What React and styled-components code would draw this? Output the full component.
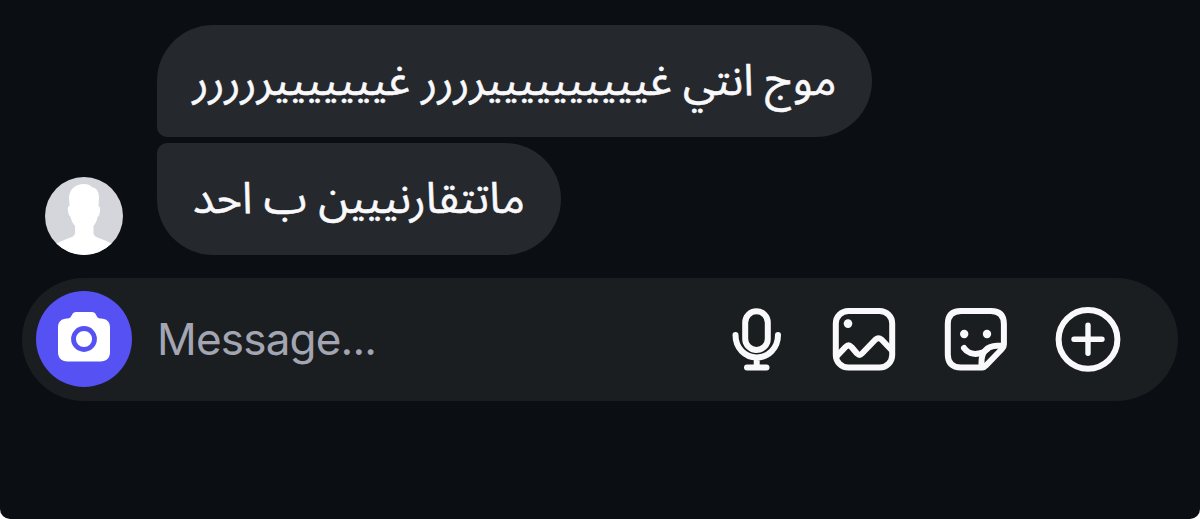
import React from "react";
import styled, { createGlobalStyle } from "styled-components";

const messages = [
  { id: 1, text: "موج انتي غييييييييييرررر غيييييييررررر", width: 715, radius: "56px 56px 56px 10px" },
  { id: 2, text: "ماتتقارنييين ب احد", width: 404, radius: "10px 56px 56px 56px" },
];

function Avatar() {
  return (
    <AvatarSvg viewBox="0 0 78 78">
      <clipPath id="avatar">
        <circle cx="39" cy="39" r="39" />
      </clipPath>
      <g clipPath="url(#avatar)">
        <rect width="78" height="78" fill="#d5d6db" />
        <path
          fill="#fff"
          d="M39 7C30 7 24 13 24 21L24.500 29C22 29.500 22.500 34 24 38C24.500 39.500 25.500 39 25.500 40C26.500 44 28 47 30 49V56C30 60 24 61 18 63.500C13 65.500 10 67 6 70V80H72V70C68 67 65 65.500 60 63.500C54 61 48.500 60 48.500 56V49C51 46 52 43 52.500 40C53.500 39 54 39 54.500 37C55.500 33 55.500 30 53.500 29L54 21C54 15 52 11 47.500 10.500C45.500 8 42.500 7 39 7Z"
        />
      </g>
    </AvatarSvg>
  );
}

function CameraIcon() {
  return (
    <svg width="52" height="50" viewBox="0 0 52 50">
      <path
        fill="#fff"
        d="M18 0H34C36 0 37 1 38 2.700C39.500 5.500 40 6.500 43 6.500C48.500 6.500 52 10 52 15V40C52 46 48.500 49.500 42.500 49.500H9.500C3.500 49.500 0 46 0 40V15C0 10 3.500 6.500 9 6.500C12 6.500 12.500 5.500 14 2.700C15 1 16 0 18 0Z"
      />
      <circle cx="26" cy="27" r="10.500" fill="none" stroke="#5551f3" strokeWidth="4.800" />
    </svg>
  );
}

function MicIcon() {
  return (
    <Icon viewBox="0 0 66 66">
      <rect x="26.200" y="5.200" width="22.600" height="38.800" rx="11.300" />
      <path d="M16.500 29C16.500 42 26 51.500 37.700 51.500S59 42 59 29M37.700 52V61M28 61.500H47.500" />
    </Icon>
  );
}

function ImageIcon() {
  return (
    <Icon viewBox="0 0 66 66">
      <rect x="4.800" y="5" width="56.400" height="56.600" rx="12.500" />
      <circle cx="17" cy="17.600" r="4.300" fill="#f9f9fb" stroke="none" />
      <path d="M5.500 50.500L14.500 41Q17.500 38 20.500 41L26 47.500Q28.500 50 31 47.500L44.500 33.500Q47.500 31 50.500 33.500L60.500 44" />
    </Icon>
  );
}

function StickerIcon() {
  return (
    <Icon viewBox="0 0 66 66">
      <path d="M39.500 61.500H18C9 61.500 4.800 57 4.800 48.500V18C4.800 9 9.500 5 18 5H48C56.500 5 60.900 9 60.900 18V38.500C60.900 40.500 60.400 41.500 58.900 43L43 59.500C41.800 60.800 41 61.500 39.500 61.500Z" />
      <path d="M38.500 61V56C38.500 46 44 40 54 39.800H60" />
      <path d="M21 42C24 46.500 30 48.800 36 47.500C39.500 46.700 42 45.500 44 43.500" />
      <circle cx="21.200" cy="28" r="4.200" fill="#f9f9fb" stroke="none" />
      <circle cx="44" cy="28" r="4.200" fill="#f9f9fb" stroke="none" />
    </Icon>
  );
}

function PlusIcon() {
  return (
    <Icon viewBox="0 0 66 66">
      <circle cx="33" cy="33.300" r="29.400" />
      <path strokeWidth="5.400" d="M33 19.300V47.300M19 33.300H47" />
    </Icon>
  );
}

function App() {
  return (
    <>
      <GlobalStyle />
      <Screen>
        <Thread>
          <Avatar />
          <Messages>
            {messages.map((item) => (
              <Bubble key={item.id} $width={item.width} $radius={item.radius}>
                <MessageText dir="rtl">{item.text}</MessageText>
              </Bubble>
            ))}
          </Messages>
        </Thread>
        <Composer>
          <CameraButton>
            <CameraIcon />
          </CameraButton>
          <Placeholder>Message...</Placeholder>
          <Actions>
            <MicIcon />
            <ImageIcon />
            <StickerIcon />
            <PlusIcon />
          </Actions>
        </Composer>
      </Screen>
    </>
  );
}

export default App;

const GlobalStyle = createGlobalStyle`
  * {
    box-sizing: border-box;
  }

  body {
    margin: 0;
    background-color: #fff;
  }
`;

const Screen = styled.main`
  height: 519px;
  padding-top: 25px;
  overflow: hidden;
  background-color: #0b0e13;
  border-radius: 0 0 10px 10px;
`;

const Thread = styled.div`
  display: flex;
  align-items: flex-end;
  gap: 34px;
  padding-left: 45px;
`;

const AvatarSvg = styled.svg`
  width: 78px;
  height: 78px;
  flex: none;
`;

const Messages = styled.div`
  display: flex;
  flex-direction: column;
  gap: 6px;
`;

const Bubble = styled.div`
  display: flex;
  align-items: center;
  justify-content: center;
  width: ${(props) => props.$width}px;
  height: 112px;
  background-color: #25282d;
  border-radius: ${(props) => props.$radius};
`;

const MessageText = styled.p`
  margin: 0;
  font-family: "Noto Sans Arabic", "Noto Sans", "DejaVu Sans", sans-serif;
  font-size: 43.700px;
  line-height: 56px;
  white-space: nowrap;
  color: #f9f9fb;
  -webkit-text-stroke: 0.5px #f9f9fb;
`;

const Composer = styled.div`
  display: flex;
  align-items: center;
  height: 123px;
  margin: 23px 22px 0;
  padding: 0 57px 1px 14px;
  background-color: #1b1e20;
  border-radius: 62px;
`;

const CameraButton = styled.div`
  display: flex;
  align-items: center;
  justify-content: center;
  width: 96px;
  height: 96px;
  padding-bottom: 5px;
  background-color: #5551f3;
  border-radius: 50%;
`;

const Placeholder = styled.span`
  margin-left: 25px;
  padding-bottom: 1px;
  font-family: Inter, sans-serif;
  font-size: 44px;
  line-height: 56px;
  letter-spacing: -0.8px;
  color: #a3a5b3;
`;

const Actions = styled.div`
  display: flex;
  gap: 46px;
  margin-left: auto;
`;

const Icon = styled.svg`
  width: 66px;
  height: 66px;
  fill: none;
  stroke: #f9f9fb;
  stroke-width: 6px;
  stroke-linecap: round;
  stroke-linejoin: round;
`;
